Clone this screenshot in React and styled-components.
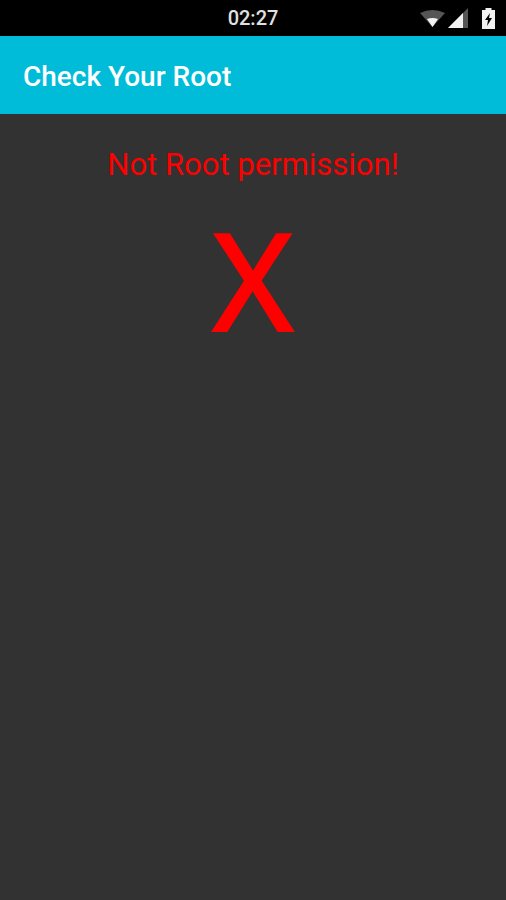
import React from 'react';
import styled, { createGlobalStyle } from 'styled-components';

const Global = createGlobalStyle`
  html, body { margin: 0; padding: 0; background: #323232; }
`;

const Screen = styled.div`
  width: 506px;
  height: 900px;
  display: flex;
  flex-direction: column;
  background: #323232;
  font-family: Roboto, "Liberation Sans", sans-serif;
  overflow: hidden;
`;

const StatusBar = styled.div`
  height: 36px;
  background: #000;
  display: grid;
  grid-template-columns: 1fr auto 1fr;
  align-items: center;
`;

const Clock = styled.span`
  grid-column: 2;
  color: #e0e0e0;
  font-size: 20px;
  font-weight: 500;
  line-height: 36px;
`;

const StatusIcons = styled.div`
  grid-column: 3;
  display: flex;
  justify-content: flex-end;
  align-items: center;
  gap: 3px;
  padding-right: 11px;
`;

const BatteryIcon = styled.svg`
  margin-left: 11px;
`;

const AppBar = styled.div`
  height: 78px;
  background: #00bcd9;
  display: flex;
  align-items: center;
  padding: 3px 0 0 23px;
  box-sizing: border-box;
`;

const Title = styled.h1`
  margin: 0;
  color: #fff;
  font-size: 28px;
  font-weight: 500;
`;

const Content = styled.main`
  flex: 1;
  display: flex;
  flex-direction: column;
  align-items: center;
  padding-top: 33px;
`;

const Message = styled.div`
  color: #f00;
  font-size: 31px;
  line-height: 36px;
`;

const Mark = styled.div`
  color: #f00;
  font-family: "Noto Sans", Arial, sans-serif;
  font-size: 139px;
  font-weight: 500;
  line-height: 166px;
  margin-top: 12px;
`;

const App = () => (
  <Screen>
    <Global />
    <StatusBar>
      <Clock>02:27</Clock>
      <StatusIcons>
        <svg width="25" height="18" viewBox="0 0 25 18">
          <path d="M0 4 Q12.500 -2 25 4 L12.500 18 Z" fill="#555" />
          <path d="M7 10 Q12.500 8 18 10 L12.500 18 Z" fill="#f2f2f2" />
        </svg>
        <svg width="20" height="20" viewBox="0 0 20 20">
          <path d="M20 0 V20 H0 Z" fill="#555" />
          <path d="M15 5 V20 H0 Z" fill="#f2f2f2" />
        </svg>
        <BatteryIcon width="13" height="21" viewBox="0 0 13 21">
          <path d="M3.500 0 H9.500 V2 H13 V21 H0 V2 H3.500 Z" fill="#f2f2f2" />
          <path d="M8 5 L3 12 H6 L5 18 L10 10 H7 Z" fill="#000" />
        </BatteryIcon>
      </StatusIcons>
    </StatusBar>
    <AppBar>
      <Title>Check Your Root</Title>
    </AppBar>
    <Content>
      <Message>Not Root permission!</Message>
      <Mark>X</Mark>
    </Content>
  </Screen>
);

export default App;
